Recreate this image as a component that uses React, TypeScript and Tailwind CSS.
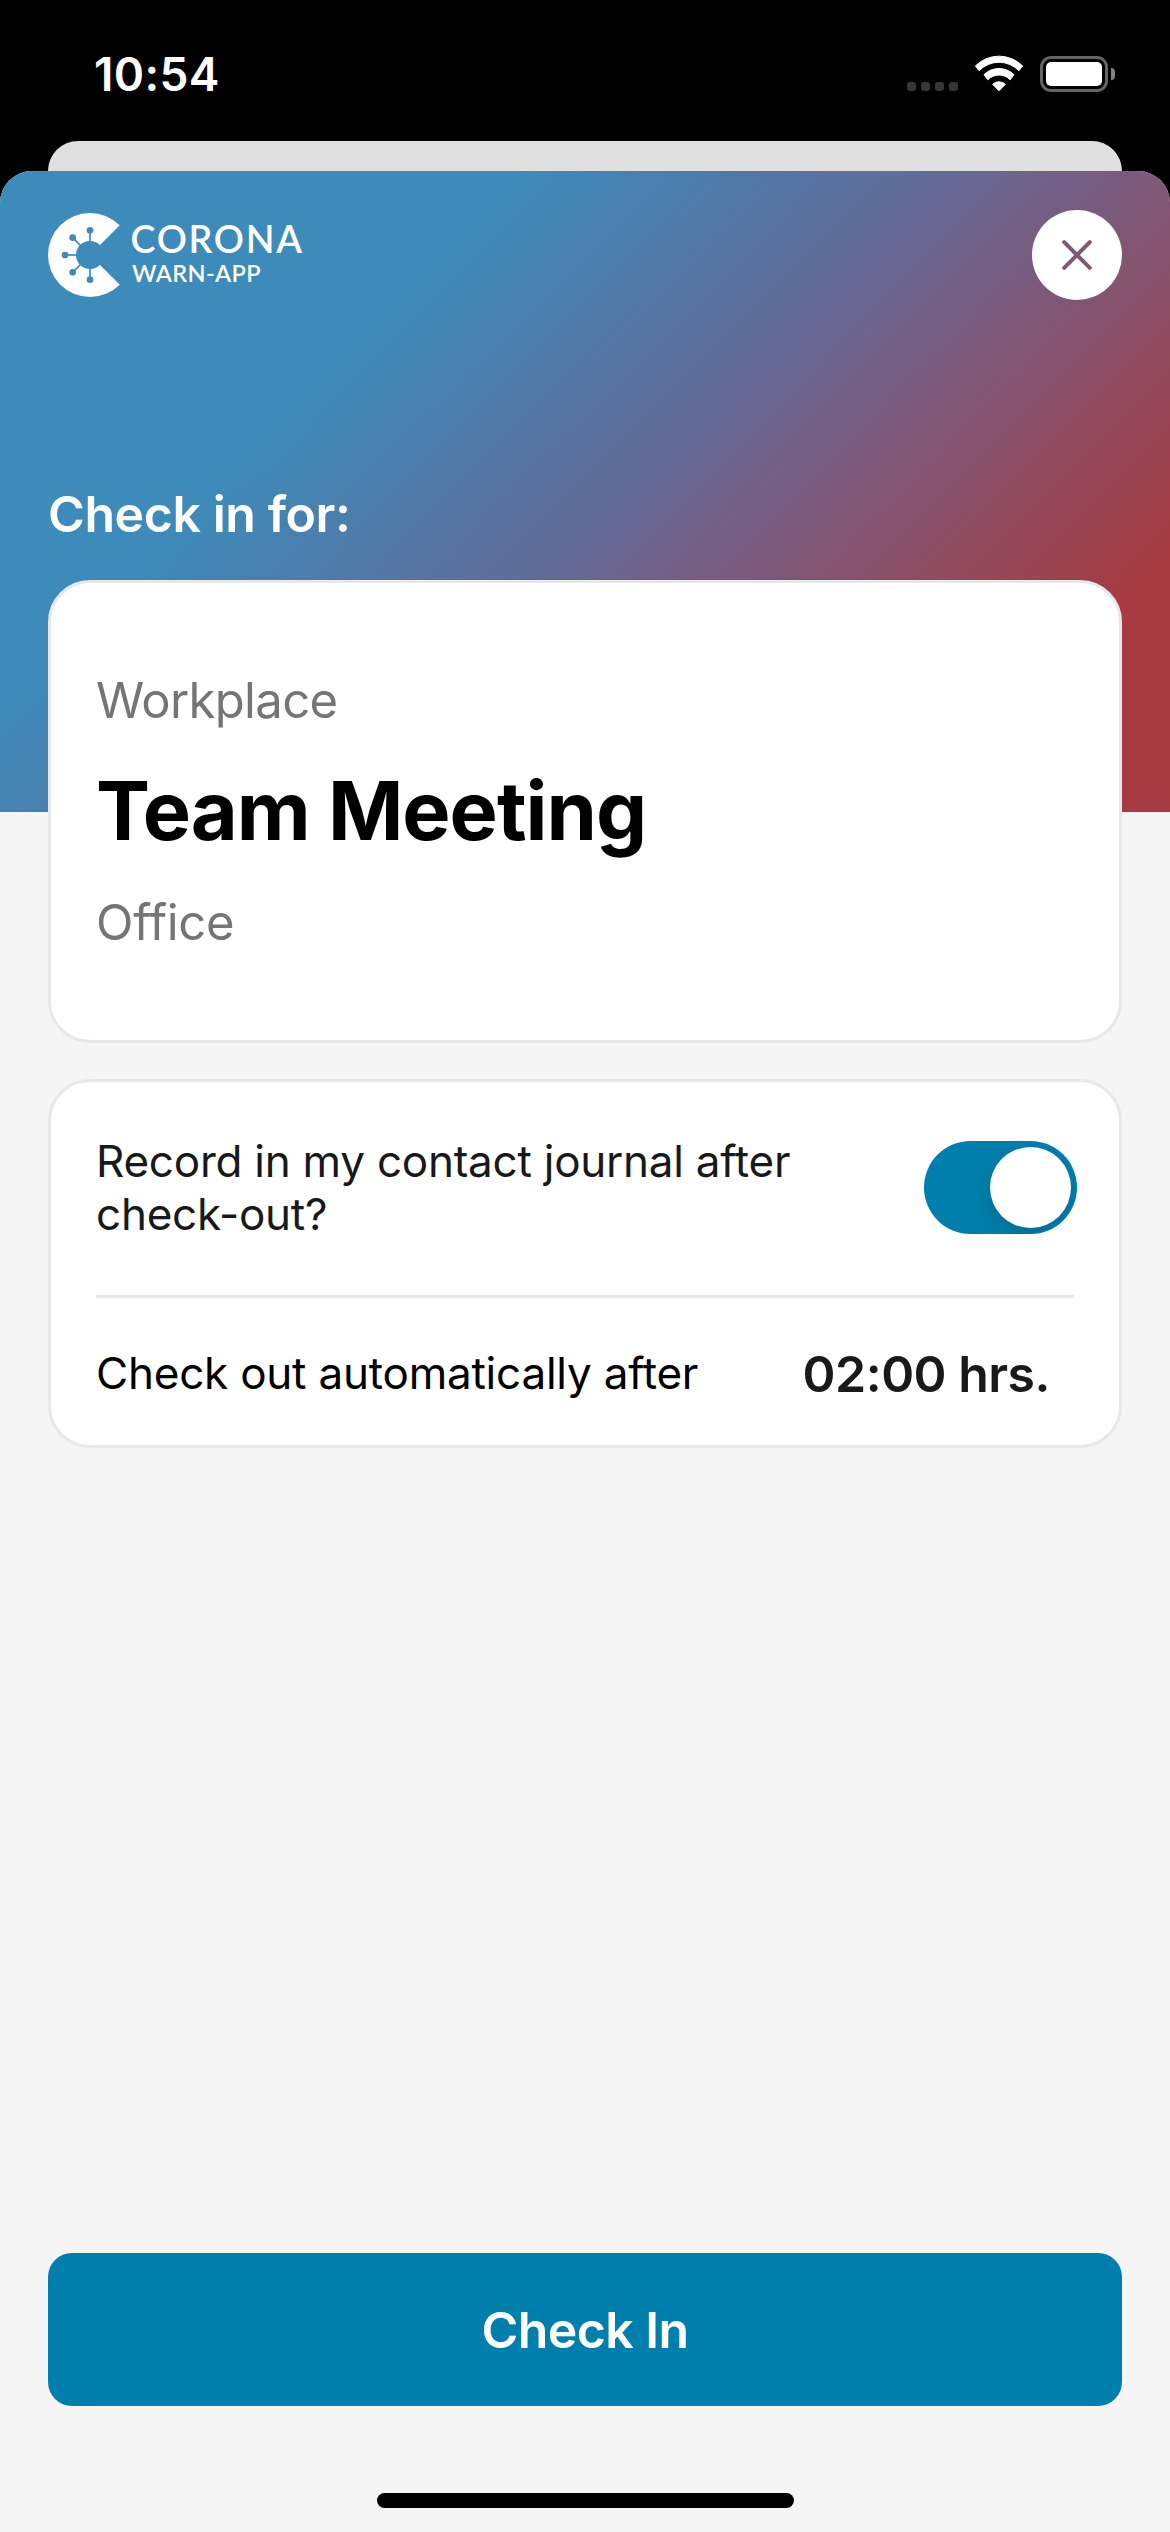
import React from "react";

function StatusBar() {
  return (
    <div className="flex h-[141px] shrink-0 items-start justify-between pl-[94px] pr-[55px]">
      <span className="mt-[44px] text-[46px] leading-[60px] font-semibold tracking-[0.35px] text-white">10:54</span>
      <div className="mt-[54px] flex h-[38px] items-start">
        <div className="mt-[28px] flex gap-[5px]">
          {[0, 1, 2, 3].map((dot) => (
            <span key={dot} className="size-[9px] rounded-[3px] bg-[#363636]" />
          ))}
        </div>
        <svg className="mt-px ml-[16px] h-[37px] w-[50px]" viewBox="282 74 150 111" fill="#fff" stroke="#fff" strokeWidth="3" strokeLinejoin="round">
          <path d="M286 107 A100 100 0 0 1 428 107 L416.500 121 A83 83 0 0 0 297.500 121 Z" />
          <path d="M312 133 A64 64 0 0 1 402 133 L390.500 148.500 A46 46 0 0 0 323.500 148.500 Z" />
          <path d="M338 162 A27 27 0 0 1 376 162 L357 181.500 Z" />
        </svg>
        <div className="ml-[16px] mt-[2px] flex items-center">
          <div className="h-[36px] w-[68px] rounded-[11px] border-[3px] border-[#646464] p-[3px]">
            <div className="h-full w-full rounded-[5px] bg-white" />
          </div>
          <span className="ml-[3px] h-[12px] w-[4px] rounded-r-full bg-[#838383]" />
        </div>
      </div>
    </div>
  );
}

const spikes = [
  [180, 121],
  [128, 143],
  [105, 195],
  [128, 247],
  [180, 269],
];

function Logo() {
  return (
    <svg className="h-[90px] w-[260px] text-white" viewBox="0 0 260 90" fill="currentColor" role="img" aria-label="Corona Warn-App">
      <mask id="virus">
        <g transform="translate(-18 -20) scale(0.33333)">
          <circle cx="180" cy="195" r="126" fill="#fff" />
          <path d="M180 195 L330 45 V345 Z" fill="#000" />
          <circle cx="180" cy="195" r="42" fill="#000" />
          {spikes.map(([x, y]) => (
            <g key={`${x}-${y}`}>
              <path d={`M180 195 L${x} ${y}`} stroke="#000" strokeWidth="5" />
              <circle cx={x} cy={y} r="10" fill="#000" />
            </g>
          ))}
        </g>
      </mask>
      <rect width="90" height="90" mask="url(#virus)" />
      <text x="82.500" y="43" textLength="171.500" fontFamily="Lato, sans-serif" fontSize="37.500" fontWeight="600">
        CORONA
      </text>
      <text x="84" y="72" textLength="128.500" fontFamily="Lato, sans-serif" fontSize="23.500" fontWeight="600">
        WARN-APP
      </text>
    </svg>
  );
}

function CloseButton() {
  return (
    <button aria-label="Close" className="flex size-[90px] items-center justify-center rounded-full bg-white text-[#7f5876]">
      <svg className="size-[30px]" viewBox="0 0 30 30" fill="none" stroke="currentColor" strokeWidth="4" strokeLinecap="round">
        <path d="M2.200 2.200 L27.800 27.800 M27.800 2.200 L2.200 27.800" />
      </svg>
    </button>
  );
}

function Toggle() {
  return (
    <div role="switch" aria-checked="true" className="flex h-[93px] w-[153px] shrink-0 items-center justify-end overflow-hidden rounded-full bg-[#007fad] p-[6px]">
      <span className="size-[81px] rounded-full bg-white shadow-[0_9px_24px_rgba(0,0,0,0.15)]" />
    </div>
  );
}

export default function App() {
  return (
    <div className="flex h-[2532px] w-[1170px] flex-col overflow-hidden bg-black font-[Inter,sans-serif]">
      <StatusBar />
      <div className="mx-[48px] h-[30px] shrink-0 rounded-t-[30px] bg-[#e0e0e0]" />
      <div className="flex flex-1 flex-col overflow-hidden rounded-t-[32px] bg-[#f5f5f5]">
        <header className="h-[641px] shrink-0 bg-[linear-gradient(134.5deg,#3c8bba_370px,#636a97_675px,#6c658f_720px,#a63b42_1098px)] px-[48px] pt-[39px]">
          <div className="flex items-center justify-between">
            <Logo />
            <CloseButton />
          </div>
          <h1 className="mt-[184px] text-[50px] leading-[60px] font-semibold tracking-[-0.42px] text-white">Check in for:</h1>
        </header>

        <main className="-mt-[232px] flex flex-col gap-[36px] px-[48px]">
          <section className="h-[463px] rounded-[42px] border-[3px] border-[#e8e8e8] bg-white px-[45px] pt-[88px]">
            <p className="text-[49px] leading-[60px] tracking-[-0.64px] text-[#757575]">Workplace</p>
            <h2 className="mt-[30px] text-[81px] leading-[100px] font-bold tracking-[-1px] text-black">Team Meeting</h2>
            <p className="mt-[32px] text-[49px] leading-[60px] tracking-[-0.34px] text-[#757575]">Office</p>
          </section>

          <section className="h-[369px] rounded-[42px] border-[3px] border-[#e8e8e8] bg-white pl-[45px]">
            <div className="flex h-[213px] items-center justify-between pr-[42px] pb-[2px]">
              <p className="w-[740px] text-[44px] leading-[53px] tracking-[-0.24px] text-[#17191a]">
                Record in my contact journal after check-out?
              </p>
              <Toggle />
            </div>
            <div className="mr-[45px] h-[3px] bg-[#e8e8e8]" />
            <div className="flex h-[147px] items-center justify-between pr-[69px]">
              <span className="mt-[4px] text-[44px] leading-[53px] tracking-[-0.22px] text-black">Check out automatically after</span>
              <span className="mt-[4px] text-[50px] leading-[60px] font-semibold tracking-[-0.51px] text-[#17191a]">02:00 hrs.</span>
            </div>
          </section>
        </main>

        <footer className="mt-auto flex flex-col items-center px-[48px] pb-[24px]">
          <button className="h-[153px] w-full rounded-[24px] bg-[#007fad] text-[50px] leading-[60px] font-semibold tracking-[-0.58px] text-white">
            Check In
          </button>
          <div className="mt-[87px] h-[15px] w-[417px] rounded-full bg-black" />
        </footer>
      </div>
    </div>
  );
}
